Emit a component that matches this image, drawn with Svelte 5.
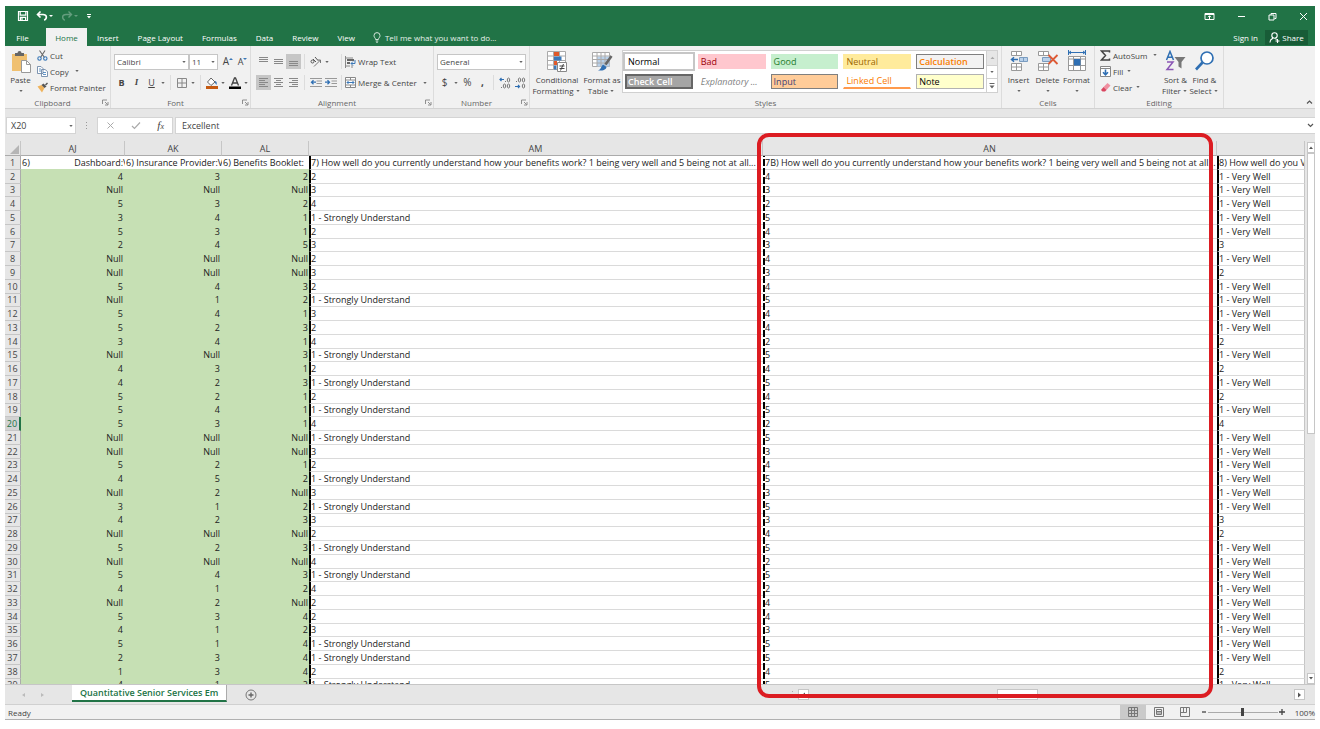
<script>
	const SU = '1 - Strongly Understand';
	const VW = '1 - Very Well';
	const N = 'Null';

	const tabs = ['File', 'Home', 'Insert', 'Page Layout', 'Formulas', 'Data', 'Review', 'View'];

	const cellStyles = [
		{ name: 'Normal', cls: 'normal' },
		{ name: 'Bad', cls: 'bad' },
		{ name: 'Good', cls: 'good' },
		{ name: 'Neutral', cls: 'neutral' },
		{ name: 'Calculation', cls: 'calculation' },
		{ name: 'Check Cell', cls: 'check' },
		{ name: 'Explanatory ...', cls: 'explanatory' },
		{ name: 'Input', cls: 'input' },
		{ name: 'Linked Cell', cls: 'linked' },
		{ name: 'Note', cls: 'note' }
	];

	const columns = ['AJ', 'AK', 'AL', 'AM', 'AN', ''];

	const question = 'How well do you currently understand how your benefits work? 1 being very well and 5 being not at all...';
	const headRow = [
		'6)' + ' '.repeat(19) + 'Dashboard:V',
		'6) Insurance Provider:V',
		'6) Benefits Booklet:',
		'7) ' + question,
		'7B) ' + question,
		'8) How well do you V'
	];

	// rows 2 - 39
	const rows = [
		[4, 3, 2, 2, 4, VW],
		[N, N, N, 3, 3, VW],
		[5, 3, 2, 4, 2, VW],
		[3, 4, 1, SU, 5, VW],
		[5, 3, 1, 2, 4, VW],
		[2, 4, 5, 3, 3, 3],
		[N, N, N, 2, 4, VW],
		[N, N, N, 3, 3, 2],
		[5, 4, 3, 2, 4, VW],
		[N, 1, 2, SU, 5, VW],
		[5, 4, 1, 3, 4, VW],
		[5, 2, 3, 2, 4, VW],
		[3, 4, 1, 4, 2, 2],
		[N, N, 3, SU, 5, VW],
		[4, 3, 1, 2, 4, 2],
		[4, 2, 3, SU, 5, VW],
		[5, 2, 1, 2, 4, 2],
		[5, 4, 1, SU, 5, VW],
		[5, 3, 1, 4, 2, 4],
		[N, N, N, SU, 5, VW],
		[N, N, N, 3, 3, VW],
		[5, 2, 1, 2, 4, VW],
		[4, 5, 2, SU, 5, VW],
		[N, 2, N, 3, 3, VW],
		[3, 1, 2, SU, 5, VW],
		[4, 2, 3, 3, 3, 3],
		[N, N, N, 2, 4, 2],
		[5, 2, 3, SU, 5, VW],
		[N, N, N, 4, 2, VW],
		[5, 4, 3, SU, 5, VW],
		[4, 1, 2, 4, 2, VW],
		[N, 2, N, 2, 4, VW],
		[5, 3, 4, 2, 4, VW],
		[4, 1, 2, 3, 3, VW],
		[5, 1, 4, SU, 5, VW],
		[2, 3, 4, SU, 5, VW],
		[1, 3, 4, 2, 4, 2],
		[4, 1, 2, SU, 5, VW]
	];

	let activeTab = $state('Home');
	let activeStyle = $state('Normal');
	let selectedRow = $state(20);
	let cellRef = $state('X20');
	let formula = $state('Excellent');
	let zoom = $state(50);
</script>

{#snippet caret()}
	<svg class="caret" width="8" height="6" viewBox="0 0 8 6" aria-hidden="true"><path d="M2.300 2h3.400L4 4z" fill="#666" /></svg>
{/snippet}

{#snippet lines(rowsList)}
	<svg width="11" height="11" viewBox="0 0 11 11" aria-hidden="true">
		{#each rowsList as [x, y, w]}
			<rect {x} {y} width={w} height="1" fill="#888" />
		{/each}
	</svg>
{/snippet}

{#snippet footer(name, launcher)}
	<div class="group-name">
		<span>{name}</span>
		{#if launcher}
			<button class="launcher" aria-label="{name} settings">
				<svg width="7" height="7" viewBox="0 0 7 7"><path d="M.5 5V1H5M3 3l2.5 2.5M6 3v3H3" fill="none" stroke="#777" stroke-width=".8" /></svg>
			</button>
		{/if}
	</div>
{/snippet}

<div class="page">
	<div class="excel">
		<header class="titlebar">
			<div class="quick">
				<button aria-label="Save">
					<svg width="12" height="12" viewBox="0 0 12 12"><path d="M1.500 1.500h9v9h-9zM3.200 1.500v3.600h5.600V1.500M3.400 10.500V7.400h5.200v3.100M5 8v2" fill="none" stroke="#fff" stroke-width="1.200" /></svg>
				</button>
				<button aria-label="Undo">
					<svg width="12" height="12" viewBox="0 0 12 12"><path d="M4.500 1.500L1.500 4.500l3 3M1.800 4.500H7c4 0 4.500 4 1.200 5.800" fill="none" stroke="#fff" stroke-width="1.600" /></svg>
					<svg width="5" height="4" viewBox="0 0 5 4"><path d="M0 1h4L2 3z" fill="#fff" /></svg>
				</button>
				<button class="dim" aria-label="Redo">
					<svg width="12" height="12" viewBox="0 0 12 12"><path d="M7.500 1.500l3 3-3 3M10.200 4.500H5c-4 0-4.500 4-1.200 5.800" fill="none" stroke="#fff" stroke-width="1.400" /></svg>
					<svg width="5" height="4" viewBox="0 0 5 4"><path d="M0 1h4L2 3z" fill="#fff" /></svg>
				</button>
				<button aria-label="Customize toolbar">
					<svg width="6" height="8" viewBox="0 0 6 8"><path d="M1 2h4v1H1zM1 4h4L3 6.500z" fill="#fff" /></svg>
				</button>
			</div>
			<div class="window">
				<button aria-label="Ribbon options">
					<svg width="11" height="9" viewBox="0 0 11 9"><path d="M1 1.500h9v6H1zM1 2.500h9M5.500 7V4M4 5.200l1.500-1.500L7 5.200" fill="none" stroke="#fff" stroke-width="1" /></svg>
				</button>
				<button aria-label="Minimize">
					<svg width="9" height="9" viewBox="0 0 9 9"><path d="M1 4.500h7" stroke="#fff" /></svg>
				</button>
				<button aria-label="Restore">
					<svg width="9" height="9" viewBox="0 0 9 9"><path d="M1 3h5v5H1zM3 3V1.500h5V6.500H6.500" fill="none" stroke="#fff" /></svg>
				</button>
				<button aria-label="Close">
					<svg width="9" height="9" viewBox="0 0 9 9"><path d="M1 1l7 7M8 1L1 8" stroke="#fff" /></svg>
				</button>
			</div>
		</header>

		<nav class="tabs">
			{#each tabs as tab}
				<button class="tab" class:active={tab === activeTab} onclick={() => (activeTab = tab)}>{tab}</button>
			{/each}
			<button class="tell">
				<svg width="8" height="11" viewBox="0 0 8 11"><path d="M2.600 7.500C2.600 6 1 5.600 1 3.600a3 3 0 0 1 6 0c0 2-1.600 2.400-1.600 3.900zM2.700 9h2.600M3.200 10.300h1.600" fill="none" stroke="#e4f0e9" stroke-width=".9" /></svg>
				Tell me what you want to do...
			</button>
			<button class="signin">Sign in</button>
			<button class="share">
				<svg width="11" height="11" viewBox="0 0 11 11"><circle cx="5.500" cy="3.500" r="2.700" fill="none" stroke="#fff" stroke-width="1.100" /><path d="M1 10.500c0-2.300 1.300-3.700 3-4.300M6.500 6.500l1 1.200M6.500 9h4M8.500 7v4" fill="none" stroke="#fff" stroke-width="1.100" /></svg>
				Share
			</button>
		</nav>

		<section class="ribbon">
			<div class="group clipboard">
				<div class="body">
					<button class="big paste">
						<svg width="22" height="24" viewBox="0 0 22 24"><path d="M2 4h15v17H2z" fill="#f0c070" /><path d="M5 3h2.500a2 2 0 0 1 4 0H14v3H5z" fill="#666" /><path d="M11.500 10.500h5l4 4v8h-9z" fill="#fff" stroke="#999" /><path d="M16.500 10.500v4h4" fill="none" stroke="#999" /></svg>
						<span>Paste</span>
						<span>{@render caret()}</span>
					</button>
					<div class="list">
						<button>
							<svg width="11" height="11" viewBox="0 0 11 11"><path d="M2.500.5L7.500 7.500M8 .5L3.500 7.500" stroke="#666" stroke-width="1.100" /><circle cx="2.500" cy="8.500" r="1.700" fill="none" stroke="#3a78b8" stroke-width="1.100" /><circle cx="8.300" cy="8.500" r="1.700" fill="none" stroke="#3a78b8" stroke-width="1.100" /></svg>
							Cut
						</button>
						<button>
							<svg width="11" height="11" viewBox="0 0 11 11"><path d="M.5.5H4l2 2v5H.5zM4.500 3.500h3.500l2.500 2v5h-6z" fill="#fff" stroke="#6f89a8" stroke-width=".9" /><path d="M2 3h2M2 5h2M6 6.500h3M6 8.500h3" stroke="#3a78b8" stroke-width=".8" /></svg>
							Copy <span class="wide">{@render caret()}</span>
						</button>
						<button>
							<svg width="11" height="11" viewBox="0 0 11 11"><path d="M.5 4.500l4-1.500 3 3-2.500 4.500z" fill="#efb35c" /><path d="M4.500 3L6.500 1.500l3 3L7.500 6z" fill="#555" /><path d="M8.500 3l2-2" stroke="#555" stroke-width="1.500" /></svg>
							Format Painter
						</button>
					</div>
				</div>
				{@render footer('Clipboard', true)}
			</div>

			<div class="group font">
				<div class="body rows">
					<div class="row">
						<label class="combo family"><select aria-label="Font"><option>Calibri</option></select>{@render caret()}</label>
						<label class="combo size"><select aria-label="Font size"><option>11</option></select>{@render caret()}</label>
						<button class="tool grow" aria-label="Increase font size">A<svg width="4" height="10" viewBox="0 0 4 10"><path d="M0 3h4L2 1z" fill="#3a78b8" /></svg></button>
						<button class="tool shrink" aria-label="Decrease font size">A<svg width="4" height="10" viewBox="0 0 4 10"><path d="M0 1h4L2 3z" fill="#3a78b8" /></svg></button>
					</div>
					<div class="row">
						<button class="tool"><b>B</b></button>
						<button class="tool serif"><i>I</i></button>
						<button class="tool"><u>U</u></button>
						{@render caret()}
						<span class="sep"></span>
						<button class="tool" aria-label="Borders">
							<svg width="10" height="10" viewBox="0 0 10 10"><path d="M.5.5h9v9h-9zM5 .5v9M.5 5h9" fill="none" stroke="#888" /></svg>
						</button>
						{@render caret()}
						<span class="sep"></span>
						<button class="tool" aria-label="Fill colour">
							<svg width="12" height="12" viewBox="0 0 12 12"><path d="M5 1l4 4-4 3.500L1.500 5z" fill="#fff" stroke="#666" /><path d="M9 4c2 .5 2 2 1.500 4L9 6z" fill="#3a78b8" /><path d="M0 9h12v3H0z" fill="#c55a11" /></svg>
						</button>
						{@render caret()}
						<button class="tool" aria-label="Font colour">
							<svg width="12" height="12" viewBox="0 0 12 12"><path d="M2.500 8.500L5.500 1h1l3 7.500M3.700 6h4.600" fill="none" stroke="#444" stroke-width="1.300" /><path d="M0 9.500h12V12H0z" fill="#000" /></svg>
						</button>
						{@render caret()}
					</div>
				</div>
				{@render footer('Font', true)}
			</div>

			<div class="group alignment">
				<div class="body rows">
					<div class="row">
						<button class="tool" aria-label="Top align">{@render lines([[1, 1, 9], [1, 3, 9], [1, 5, 9]])}</button>
						<button class="tool" aria-label="Middle align">{@render lines([[1, 3, 9], [1, 5, 9], [1, 7, 9]])}</button>
						<button class="tool on" aria-label="Bottom align">{@render lines([[1, 5, 9], [1, 7, 9], [1, 9, 9]])}</button>
						<span class="sep"></span>
						<div class="pair">
							<button class="tool" aria-label="Orientation">
								<svg width="12" height="12" viewBox="0 0 12 12"><path d="M4 10.500L10.500 4M10.500 4v3M10.500 4h-3" fill="none" stroke="#777" /><circle cx="2.500" cy="5.500" r="1.500" fill="none" stroke="#555" /><path d="M3 3l3 3M5 1l3 3.500" stroke="#555" /></svg>
							</button>
							{@render caret()}
						</div>
						<span class="sep"></span>
						<button class="text-tool">
							<svg width="11" height="12" viewBox="0 0 11 12"><path d="M.5 0v12M7 1v2M7 9v3M.5 2H6M.5 10H5" stroke="#888" /><path d="M2 4h7M2 7h3" stroke="#666" stroke-width="2" /><path d="M10 4v3.500H6M8 5.500l-2 2 2 2" fill="none" stroke="#3a78b8" /></svg>
							Wrap Text
						</button>
					</div>
					<div class="row">
						<button class="tool on" aria-label="Align left">{@render lines([[1, 1, 9], [1, 3, 6], [1, 5, 9], [1, 7, 6], [1, 9, 9]])}</button>
						<button class="tool" aria-label="Center">{@render lines([[1, 1, 9], [3, 3, 5], [1, 5, 9], [3, 7, 5], [1, 9, 9]])}</button>
						<button class="tool" aria-label="Align right">{@render lines([[1, 1, 9], [4, 3, 6], [1, 5, 9], [4, 7, 6], [1, 9, 9]])}</button>
						<span class="sep"></span>
						<div class="pair">
							<button class="tool" aria-label="Decrease indent">
								<svg width="12" height="11" viewBox="0 0 12 11"><path d="M0 1.500h12M6.500 4h5.500M6.500 6.500h5.500M0 9.500h12" stroke="#999" /><path d="M6 5.200H2M3.500 3.200l-2 2 2 2" fill="none" stroke="#2f6fb3" stroke-width="1.300" /></svg>
							</button>
							<button class="tool" aria-label="Increase indent">
								<svg width="12" height="11" viewBox="0 0 12 11"><path d="M0 1.500h12M6.500 4h5.500M6.500 6.500h5.500M0 9.500h12" stroke="#999" /><path d="M0 5.200h4M2.500 3.200l2 2-2 2" fill="none" stroke="#2f6fb3" stroke-width="1.300" /></svg>
							</button>
						</div>
						<span class="sep"></span>
						<button class="text-tool">
							<svg width="11" height="11" viewBox="0 0 11 11"><path d="M.5.5h10v10H.5zM.5 3h10M.5 8h10M5.500.5V3M5.500 8v2.500" fill="#fff" stroke="#888" /><path d="M2 5.500h7M3.500 4L2 5.500 3.500 7M7.500 4L9 5.500 7.500 7" fill="none" stroke="#3a78b8" /></svg>
							Merge & Center <span class="wide">{@render caret()}</span>
						</button>
					</div>
				</div>
				{@render footer('Alignment', true)}
			</div>

			<div class="group number">
				<div class="body rows">
					<div class="row">
						<label class="combo format"><select aria-label="Number format"><option>General</option></select>{@render caret()}</label>
					</div>
					<div class="row">
						<button class="tool symbol">$</button>
						{@render caret()}
						<button class="tool symbol">%</button>
						<button class="tool symbol"><b>,</b></button>
						<span class="sep"></span>
						<button class="tool" aria-label="Increase decimal">
							<svg width="12" height="12" viewBox="0 0 12 12"><path d="M5 2.500H1M2.500 1L1 2.500 2.500 4" fill="none" stroke="#2f6fb3" stroke-width="1.200" /><g fill="none" stroke="#777"><ellipse cx="9.500" cy="3" rx="1.200" ry="2" /><ellipse cx="5.500" cy="9" rx="1.200" ry="2" /><ellipse cx="9.500" cy="9" rx="1.200" ry="2" /></g><path d="M6 4h1v1H6zM2 10h1v1H2z" fill="#777" /></svg>
						</button>
						<button class="tool" aria-label="Decrease decimal">
							<svg width="12" height="12" viewBox="0 0 12 12"><path d="M1 9.500h4.500M4 8l1.500 1.500L4 11" fill="none" stroke="#2f6fb3" stroke-width="1.200" /><g fill="none" stroke="#777"><ellipse cx="5.500" cy="3" rx="1.200" ry="2" /><ellipse cx="9.500" cy="3" rx="1.200" ry="2" /><ellipse cx="9.500" cy="9" rx="1.200" ry="2" /></g><path d="M2 4h1v1H2z" fill="#777" /></svg>
						</button>
					</div>
				</div>
				{@render footer('Number', true)}
			</div>

			<div class="group styles">
				<div class="body">
					<button class="big conditional">
						<svg width="22" height="24" viewBox="0 0 22 24"><path d="M1.500 1.500h18v18h-18z" fill="#fff" stroke="#aaa" /><path d="M7.500 1.500v18M13.500 1.500v18M1.500 6h18M1.500 10.500h18M1.500 15h18" stroke="#aaa" /><path d="M8 2h5v4H8zM8 11h3v4H8z" fill="#e0592a" /><path d="M8 6.500h7.500v4H8zM8 15.500h2.500v4H8z" fill="#3a78b8" /><path d="M11.500 12.500h9v9h-9z" fill="#fff" stroke="#888" /><path d="M13.500 16h5M13.500 18.500h5M17.500 14l-3 6.500" stroke="#444" /></svg>
						<span>Conditional</span>
						<span>Formatting{@render caret()}</span>
					</button>
					<button class="big astable">
						<svg width="22" height="24" viewBox="0 0 22 24"><path d="M1.500 2.500h17v14h-17z" fill="#fff" stroke="#aaa" /><path d="M6 6.500h12.500v10H6z" fill="#b9d1ea" /><path d="M6 2.500v14M10 2.500v14M14 2.500v14M1.500 6h17M1.500 9.500h17M1.500 13h17" stroke="#aaa" /><path d="M20.500 6l-6 8.500" stroke="#666" stroke-width="2.600" /><path d="M12 14.500l3.500 2.500c-.5 3-4.500 4-8.500 3.500 3-1 3-4 5-6z" fill="#2f6fb3" /></svg>
						<span>Format as</span>
						<span>Table{@render caret()}</span>
					</button>
					<div class="gallery">
						<div class="swatches">
							{#each cellStyles as s}
								<button class="swatch {s.cls}" class:chosen={s.name === activeStyle} onclick={() => (activeStyle = s.name)}>{s.name}</button>
							{/each}
						</div>
						<div class="gallery-nav">
							<button class="off" aria-label="Previous styles"><svg width="7" height="6" viewBox="0 0 7 6"><path d="M1.500 4h4l-2-2.200z" fill="#aaa" /></svg></button>
							<button aria-label="Next styles">{@render caret()}</button>
							<button aria-label="All styles"><svg width="8" height="8" viewBox="0 0 8 8"><path d="M1.500 1h5v1h-5zM1.500 3.500h5L4 6.500z" fill="#666" /></svg></button>
						</div>
					</div>
				</div>
				{@render footer('Styles', false)}
			</div>

			<div class="group cells">
				<div class="body">
					<button class="big">
						<svg width="20" height="24" viewBox="0 0 20 24"><path d="M2.500 1.500h10v4h-10zM7.500 1.500v4M2.500 13.500h10v7h-10zM7.500 13.500v7M2.500 17h10" fill="#fff" stroke="#999" /><path d="M10.500 7.500h8v4h-8z" fill="#b9d1ea" stroke="#7a9cc0" /><path d="M14.500 7.500v4" stroke="#7a9cc0" /><path d="M9 9.500H3M5 7.200L2.500 9.500 5 11.800" fill="none" stroke="#2f6fb3" stroke-width="1.500" /></svg>
						<span>Insert</span>
						<span>{@render caret()}</span>
					</button>
					<button class="big">
						<svg width="22" height="24" viewBox="0 0 22 24"><path d="M1.500 1.500h10v4h-10zM6.500 1.500v4M1.500 13.500h10v7h-10zM6.500 13.500v7M1.500 17h10" fill="#fff" stroke="#999" /><path d="M5.500 7.500h8v4h-8z" fill="#b9d1ea" stroke="#7a9cc0" /><path d="M11.500 5l9 9M20.500 5l-9 9" stroke="#dd5a35" stroke-width="1.800" /></svg>
						<span>Delete</span>
						<span>{@render caret()}</span>
					</button>
					<button class="big">
						<svg width="22" height="24" viewBox="0 0 22 24"><path d="M3 2.500h16M5 1L3 2.500 5 4M17 1l2 1.500L17 4M2.500 0v5M19.500 0v5" fill="none" stroke="#2f6fb3" /><path d="M2.500 6.500h17v14h-17z" fill="#fff" stroke="#999" /><path d="M7.500 6.500v14M14.500 6.500v14M2.500 9h17M2.500 15.500h17" stroke="#999" /><path d="M8 9h6.500v6.500H8z" fill="#2f6fb3" /></svg>
						<span>Format</span>
						<span>{@render caret()}</span>
					</button>
				</div>
				{@render footer('Cells', false)}
			</div>

			<div class="group editing">
				<div class="body">
					<div class="list">
						<button>
							<svg width="11" height="11" viewBox="0 0 11 11"><path d="M9.500 2.500V1H1.500l4 4.500-4 4.500h8V8.500" fill="none" stroke="#444" stroke-width="1.500" /></svg>
							AutoSum <span class="wide">{@render caret()}</span>
						</button>
						<button>
							<svg width="11" height="11" viewBox="0 0 11 11"><path d="M.5.5h10v10H.5zM.5 2.500h10" fill="#fff" stroke="#888" /><path d="M5.500 3.500v5M3 6.300l2.500 2.500L8 6.300" fill="none" stroke="#2f6fb3" stroke-width="1.600" /></svg>
							Fill{@render caret()}
						</button>
						<button>
							<svg width="11" height="11" viewBox="0 0 11 11"><path d="M3.500 5l4-4 3 2.500-4 4.500z" fill="#ef8fa0" /><path d="M3.500 5l3 3-1.500 1.500H2.500L1 8z" fill="#d9455f" /></svg>
							Clear{@render caret()}
						</button>
					</div>
					<button class="big sort">
						<svg width="22" height="24" viewBox="0 0 22 24"><path d="M1.500 10L5 1.500 8.500 10M2.700 7.200h4.600" fill="none" stroke="#2f6fb3" stroke-width="1.500" /><path d="M2 12h6L2 19.500h6.500" fill="none" stroke="#8a55b5" stroke-width="1.500" /><path d="M9.500 7h11l-4 5v6.500l-3-2V12z" fill="#777" /></svg>
						<span>Sort &</span>
						<span>Filter{@render caret()}</span>
					</button>
					<button class="big find">
						<svg width="22" height="24" viewBox="0 0 22 24"><circle cx="13" cy="8" r="6" fill="#fff" stroke="#2f6fb3" stroke-width="1.700" /><path d="M8.500 12.500l-6.500 7" stroke="#2f6fb3" stroke-width="2.600" /></svg>
						<span>Find &</span>
						<span>Select{@render caret()}</span>
					</button>
				</div>
				{@render footer('Editing', false)}
			</div>
			<button class="collapse" aria-label="Collapse ribbon"><svg width="7" height="6" viewBox="0 0 7 6"><path d="M1 4.500L3.500 2 6 4.500" fill="none" stroke="#555" stroke-width="1.200" /></svg></button>
		</section>

		<section class="formula-bar">
			<label class="name-box"><input aria-label="Name box" bind:value={cellRef} />{@render caret()}</label>
			<svg class="dots" width="3" height="9" viewBox="0 0 3 9" aria-hidden="true"><path d="M1 1h1v1H1zM1 4h1v1H1zM1 7h1v1H1z" fill="#999" /></svg>
			<div class="entry">
				<button aria-label="Cancel"><svg width="9" height="9" viewBox="0 0 9 9"><path d="M1.500 1.500l6 6M7.500 1.500l-6 6" stroke="#aaa" /></svg></button>
				<button aria-label="Enter"><svg width="10" height="9" viewBox="0 0 10 9"><path d="M1 5l2.500 2.500L9 1.500" fill="none" stroke="#aaa" stroke-width="1.200" /></svg></button>
				<button class="fx" aria-label="Insert function"><i>f<small>x</small></i></button>
			</div>
			<label class="formula"><input aria-label="Formula" bind:value={formula} /><svg width="9" height="7" viewBox="0 0 9 7"><path d="M2 2l2.500 2.500L7 2" fill="none" stroke="#555" stroke-width="1.200" /></svg></label>
		</section>

		<main class="sheet">
			<div class="grid">
				<table>
					<colgroup>
						<col class="c-num" /><col class="c-aj" /><col class="c-ak" /><col class="c-al" /><col /><col class="c-an" /><col class="c-ao" />
					</colgroup>
					<thead>
						<tr>
							<th class="corner"><svg width="9" height="9" viewBox="0 0 9 9" aria-hidden="true"><path d="M9 0v9H0z" fill="#b5b5b5" /></svg></th>
							{#each columns as c}
								<th>{c}</th>
							{/each}
						</tr>
					</thead>
					<tbody>
						<tr class="first">
							<th>1</th>
							{#each headRow as text}
								<td>{text}</td>
							{/each}
						</tr>
						{#each rows as row, i}
							<tr class:selected={i + 2 === selectedRow} onclick={() => (selectedRow = i + 2)}>
								<th>{i + 2}</th>
								{#each row as value}
									<td>{value}</td>
								{/each}
							</tr>
						{/each}
					</tbody>
				</table>
			</div>
			<div class="vscroll">
				<button aria-label="Scroll up"><svg width="6" height="5" viewBox="0 0 6 5"><path d="M1 4h4L3 1.500z" fill="#555" /></svg></button>
				<div class="vtrack"><div class="vthumb"></div></div>
				<button aria-label="Scroll down"><svg width="6" height="5" viewBox="0 0 6 5"><path d="M1 1h4L3 3.500z" fill="#555" /></svg></button>
			</div>
		</main>

		<div class="sheet-bar">
			<div class="sheet-nav">
				<button aria-label="Previous sheet"><svg width="5" height="6" viewBox="0 0 5 6"><path d="M4 1v4L1 3z" fill="#bbb" /></svg></button>
				<button aria-label="Next sheet"><svg width="5" height="6" viewBox="0 0 5 6"><path d="M1 1v4l3-2z" fill="#bbb" /></svg></button>
			</div>
			<button class="sheet-tab">Quantitative Senior Services Em</button>
			<button class="add" aria-label="New sheet"><svg width="12" height="12" viewBox="0 0 12 12"><circle cx="6" cy="6" r="5" fill="none" stroke="#777" /><path d="M6 3.500v5M3.500 6h5" stroke="#666" stroke-width="1.400" /></svg></button>
			<div class="hscroll">
				<svg width="3" height="9" viewBox="0 0 3 9" aria-hidden="true"><path d="M1 1h1v1H1zM1 4h1v1H1zM1 7h1v1H1z" fill="#aaa" /></svg>
				<button aria-label="Scroll left"><svg width="5" height="6" viewBox="0 0 5 6"><path d="M4 .5v5L1 3z" fill="#555" /></svg></button>
				<div class="htrack"><div class="hthumb"></div></div>
				<button aria-label="Scroll right"><svg width="5" height="6" viewBox="0 0 5 6"><path d="M1 .5v5L4 3z" fill="#555" /></svg></button>
			</div>
		</div>

		<footer class="status">
			<span class="ready">Ready</span>
			<button class="view on" aria-label="Normal view"><svg width="10" height="10" viewBox="0 0 10 10"><path d="M.5.5h9v9h-9zM3.500.5v9M6.500.5v9M.5 3.500h9M.5 6.500h9" fill="none" stroke="#777" /></svg></button>
			<button class="view" aria-label="Page layout view"><svg width="10" height="10" viewBox="0 0 10 10"><path d="M.5.5h9v9h-9zM2.500 2.500h5v5h-5zM3 4.500h4M3 6h4" fill="none" stroke="#777" /></svg></button>
			<button class="view" aria-label="Page break view"><svg width="10" height="10" viewBox="0 0 10 10"><path d="M.5.5h9v9h-9zM3.500.5v5M6.500.5v5M.5 5.500h6" fill="none" stroke="#777" /></svg></button>
			<div class="zoom-bar">
				<button class="step" aria-label="Zoom out"><svg width="6" height="6" viewBox="0 0 6 6"><path d="M1 3h4" stroke="#444" stroke-width="1.300" /></svg></button>
				<input class="zoom" type="range" aria-label="Zoom" bind:value={zoom} />
				<button class="step" aria-label="Zoom in"><svg width="6" height="6" viewBox="0 0 6 6"><path d="M0 3h6M3 0v6" stroke="#444" stroke-width="1.300" /></svg></button>
			</div>
			<span class="percent">100%</span>
		</footer>

		<!-- red frame around column AN -->
		<div class="callout"></div>
	</div>
</div>

<style>
	:global(body) {
		background: #fff;
	}

	.page {
		box-sizing: border-box;
		height: 100vh;
		padding: 6px 5px 9px;
		font-family: "Open Sans", "Noto Sans", sans-serif;
		font-size: 8px;
		line-height: 11px;
		color: #444;
	}

	.page * {
		box-sizing: border-box;
	}

	.excel {
		position: relative;
		display: flex;
		flex-direction: column;
		height: 100%;
		background: #e6e6e6;
		border-bottom: 1px solid #b0b0b0;
	}

	button, select, input {
		font: inherit;
		color: inherit;
		margin: 0;
		padding: 0;
		border: none;
		background: none;
		border-radius: 0;
	}

	button {
		display: flex;
		align-items: center;
		justify-content: center;
		white-space: nowrap;
	}

	svg {
		display: block;
		flex: none;
	}

	/* title bar and tabs */
	.titlebar {
		display: flex;
		justify-content: space-between;
		height: 22px;
		flex: none;
		padding-bottom: 2px;
		background: #217346;
	}

	.quick {
		display: flex;
		align-items: center;
		gap: 7px;
		padding-left: 12px;

		button {
			gap: 1px;
		}

		.dim {
			opacity: 0.3;
		}
	}

	.window {
		display: flex;
		align-items: center;
		gap: 22px;
		padding-right: 7px;
	}

	.tabs {
		display: flex;
		gap: 1px;
		height: 18px;
		flex: none;
		background: #217346;
		color: #fff;
	}

	.tab {
		padding: 0 9px;
	}

	.tab:first-child {
		width: 40px;
		padding-right: 14px;
	}

	.tab.active {
		width: 41px;
		background: #f1f1f1;
		color: #217346;
	}

	.tell {
		gap: 4px;
		padding-left: 8px;
		color: #e4f0e9;
	}

	.signin {
		margin-left: auto;
		padding-right: 6px;
	}

	.share {
		gap: 2px;
		width: 43px;
		height: 15px;
		margin-right: 7px;
		align-self: center;
		background: #185c37;
	}

	/* ribbon */
	.ribbon {
		display: flex;
		height: 63px;
		flex: none;
		background: #f1f1f1;
		border-bottom: 1px solid #d2d2d2;
	}

	.group {
		display: flex;
		flex-direction: column;
		flex: none;
		border-right: 1px solid #dcdcdc;
	}

	.clipboard { width: 106px; }
	.font { width: 140px; }
	.alignment { width: 183px; }
	.number { width: 96px; }
	.styles { width: 472px; }
	.cells { width: 93px; }
	.editing { width: 129px; }

	.body {
		display: flex;
		flex: 1;
		padding: 0 2px;
	}

	.clipboard .body {
		padding-left: 1px;
	}

	.rows {
		flex-direction: column;
		gap: 6px;
		padding: 8px 0 0 3px;
	}

	.alignment .rows {
		padding-left: 5px;
	}

	.row {
		display: flex;
		align-items: center;
		height: 15px;
	}

	.group-name {
		display: flex;
		align-items: center;
		height: 12px;
		color: #666;

		span {
			flex: 1;
			text-align: center;
		}
	}

	.launcher {
		width: 10px;
	}

	.big {
		flex-direction: column;
		justify-content: flex-start;
		width: 29px;
		padding-top: 4px;

		span {
			display: flex;
			align-items: center;
			height: 11px;
		}
	}

	.conditional { width: 50px; }
	.astable { width: 40px; }

	.list {
		display: flex;
		flex-direction: column;
		padding: 1px 0 0 2px;

		button {
			justify-content: flex-start;
			gap: 2px;
			height: 16px;
		}
	}

	.editing .list {
		width: 64px;
		padding-left: 3px;
	}

	.wide {
		padding-left: 2px;
	}

	.tool {
		width: 15px;
		height: 15px;
		font-size: 9px;
	}

	.tool.on {
		background: #c6c6c6;
	}

	.serif {
		font-family: "Liberation Serif", serif;
		font-weight: bold;
	}

	.grow {
		margin-left: 2px;
		font-size: 10px;
	}

	.symbol {
		font-size: 10px;
	}

	.pair {
		display: flex;
		align-items: center;
		width: 30px;
	}

	.text-tool {
		gap: 2px;
	}

	.sep {
		width: 1px;
		height: 15px;
		margin: 0 3px;
		background: #dcdcdc;
	}

	.combo {
		display: flex;
		align-items: center;
		height: 16px;
		background: #fff;
		border: 1px solid #c6c6c6;

		select {
			flex: 1;
			min-width: 0;
			padding-left: 2px;
			appearance: none;
		}
	}

	.family { width: 76px; }
	.size { width: 30px; }
	.format { width: 89px; }

	.gallery {
		display: flex;
		width: 376px;
		height: 43px;
		margin-top: 4px;
		background: #fff;
		border: 1px solid #d0d0d0;
	}

	.swatches {
		display: grid;
		flex: 1;
		grid-template-columns: repeat(5, 1fr);
		gap: 4px 5px;
		padding: 3px 2px;
	}

	.swatch {
		justify-content: flex-start;
		height: 15px;
		padding-left: 2px;
		font-size: 9px;
		border: 1px solid transparent;
	}

	.normal { color: #000; }
	.bad { background: #ffc7ce; color: #9c0006; }
	.good { background: #c6efce; color: #1f7a2a; }
	.neutral { background: #ffeb9c; color: #9c6500; }
	.calculation { background: #f2f2f2; border-color: #7f7f7f; color: #fa7d00; font-weight: 600; }
	.check { background: #a5a5a5; border: 2px solid #666; padding-left: 1px; color: #fff; font-weight: 600; }
	.explanatory { color: #7f7f7f; font-style: italic; }
	.input { background: #ffcc99; border-color: #7f7f7f; color: #3f3f76; }
	.linked { border-bottom: 2px solid #ff9a4d; color: #fa7d00; }
	.note { background: #ffffcc; border-color: #b2b2b2; color: #000; }

	.swatch.chosen {
		outline: 2px solid #c6c6c6;
	}

	.gallery-nav {
		display: grid;
		grid-template-rows: repeat(3, 1fr);
		width: 11px;
		border-left: 1px solid #d0d0d0;

		button + button {
			border-top: 1px solid #d0d0d0;
		}

		.off {
			background: #e6e6e6;
		}
	}

	.collapse {
		align-self: flex-end;
		width: 11px;
		height: 12px;
		margin-left: auto;
	}

	/* formula bar */
	.formula-bar {
		display: flex;
		align-items: center;
		height: 32px;
		flex: none;
		padding: 1px 0 0 1px;
		font-size: 9px;
	}

	.name-box, .entry, .formula {
		display: flex;
		align-items: center;
		height: 17px;
		background: #fff;
		border: 1px solid #d4d4d4;
	}

	.name-box {
		width: 70px;

		input {
			flex: 1;
			min-width: 0;
			padding-left: 4px;
		}
	}

	.dots {
		margin: 0 9px;
	}

	.entry {
		width: 76px;
		justify-content: space-around;
	}

	.fx {
		font-family: "Liberation Serif", serif;
		font-size: 11px;

		small {
			font-size: 8px;
		}
	}

	.formula {
		flex: 1;
		margin-left: 2px;
		border-right: none;

		input {
			flex: 1;
			padding-left: 6px;
		}
	}

	/* grid */
	.sheet {
		display: flex;
		flex: 1;
		min-height: 0;
		border-bottom: 1px solid #c6c6c6;
	}

	.grid {
		flex: 1;
		min-width: 0;
		overflow: hidden;
	}

	table {
		width: 100%;
		table-layout: fixed;
		border-spacing: 0;
		background: #fff;
		font-size: 9px;
		line-height: 12px;
		color: #222;
	}

	.c-num { width: 16px; }
	.c-aj { width: 104px; }
	.c-ak { width: 97px; }
	.c-al { width: 87px; }
	.c-ao { width: 88px; }

	.c-an {
		background: repeating-linear-gradient(#000 0 7px, transparent 7px 9px) left / 2px 100% no-repeat;
	}

	tr {
		height: 14px;
	}

	tbody tr:nth-child(4n + 3) {
		height: 13px;
	}

	th, td {
		padding: 0 1px;
		overflow: hidden;
		white-space: pre;
	}

	th {
		background: #e6e6e6;
		font-weight: normal;
		color: #444;
	}

	thead th {
		height: 15px;
		padding-top: 1px;
		border-right: 1px solid #c6c6c6;
		border-bottom: 1px solid #ababab;
		line-height: 13px;
	}

	.corner svg {
		margin: 2px 0 0 4px;
	}

	tbody th {
		border-right: 1px solid #ababab;
		border-bottom: 1px solid #c6c6c6;
	}

	tbody td {
		border-bottom: 1px solid #dadada;
	}

	td:nth-child(-n + 4) {
		background: #c6e0b4;
		border-bottom-color: #c6e0b4;
		text-align: right;
	}

	.first td {
		background: none;
		text-align: left;
	}

	td:nth-child(-n + 3) {
		padding-right: 2px;
	}

	td:nth-child(5), td:nth-child(7) {
		padding-left: 0;
		border-left: 2px solid #000;
	}

	/* the gridline stops short of the dashed column edge */
	td:nth-child(6), .first td:nth-child(6) {
		padding: 0 0 1px 2px;
		border-bottom: none;
		background: linear-gradient(#dadada, #dadada) 2px 100% / 100% 1px no-repeat;
	}

	td:last-child {
		border-right: 1px solid #c6c6c6;
	}

	.selected th {
		background: #d2d2d2;
		border-right: 2px solid #217346;
		color: #217346;
	}

	.vscroll {
		display: flex;
		flex-direction: column;
		width: 10px;
		flex: none;
		padding: 1px 0 0 2px;

		button {
			height: 11px;
			background: #fff;
			border: 1px solid #c6c6c6;
		}
	}

	.vtrack {
		flex: 1;
	}

	.vthumb {
		height: 54%;
		background: #fff;
		border: 1px solid #c6c6c6;
	}

	/* sheet tabs */
	.sheet-bar {
		display: flex;
		height: 19px;
		flex: none;
	}

	.sheet-nav {
		display: flex;
		justify-content: center;
		gap: 14px;
		width: 67px;
		padding-right: 12px;
	}

	.sheet-tab {
		height: 17px;
		padding: 0 8px;
		background: #fff;
		border-right: 1px solid #ababab;
		border-bottom: 2px solid #217346;
		color: #217346;
		font-size: 9px;
		font-weight: 600;
	}

	.add {
		margin-left: 18px;
	}

	.hscroll {
		display: flex;
		align-items: center;
		width: 40%;
		margin-left: auto;
		padding-right: 10px;

		button {
			width: 11px;
			height: 11px;
			margin-left: 4px;
			background: #fff;
			border: 1px solid #c6c6c6;
		}
	}

	.htrack {
		display: flex;
		flex: 1;
	}

	.hthumb {
		width: 41px;
		height: 11px;
		margin-left: 39%;
		background: #fff;
		border: 1px solid #c6c6c6;
	}

	/* status bar */
	.status {
		display: flex;
		align-items: center;
		height: 15px;
		flex: none;
		background: #f1f1f1;
		border-top: 1px solid #d0d0d0;
	}

	.ready {
		flex: 1;
		padding-left: 3px;
	}

	.view {
		width: 26px;
		height: 100%;
	}

	.view.on {
		background: #cacaca;
	}

	.zoom-bar {
		display: flex;
		align-items: center;
		margin: 0 9px 0 2px;
	}

	.step {
		width: 8px;
	}

	.zoom {
		width: 70px;
		height: 10px;
		appearance: none;
		background: linear-gradient(#aaa, #aaa) center / 100% 1px no-repeat;
	}

	.zoom::-webkit-slider-thumb {
		appearance: none;
		width: 3px;
		height: 8px;
		background: #444;
	}

	.callout {
		position: absolute;
		top: 127px;
		right: 102px;
		bottom: 21px;
		left: 752px;
		border: 4px solid #dc1c22;
		border-radius: 12px;
		pointer-events: none;
	}
</style>
